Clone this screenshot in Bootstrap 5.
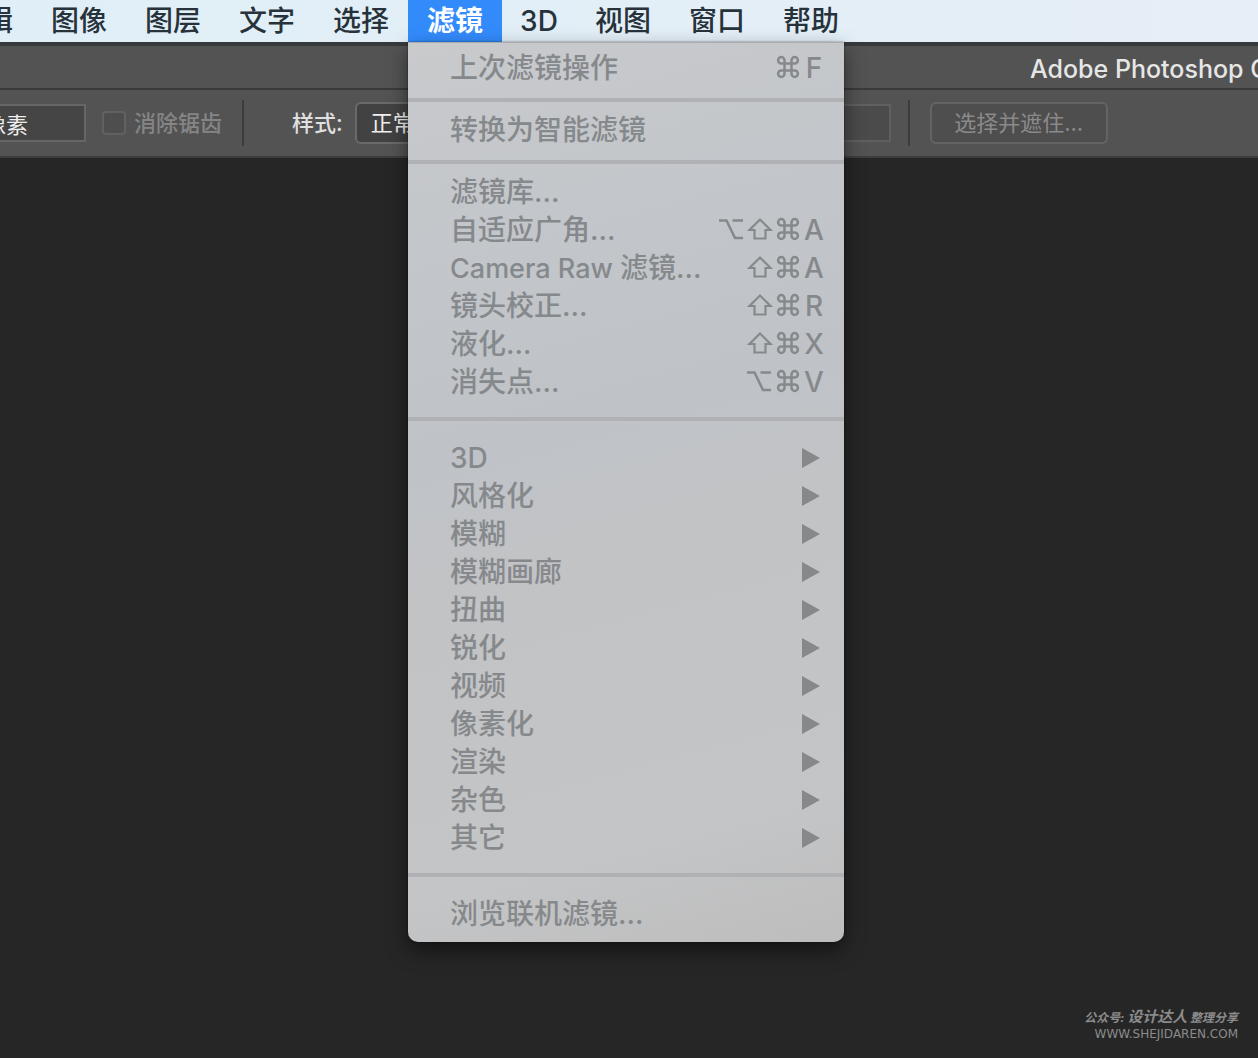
<!DOCTYPE html>
<html lang="zh-CN">
<head>
<meta charset="utf-8">
<meta name="viewport" content="width=device-width, initial-scale=1">
<title>Adobe Photoshop CC</title>
<link href="https://cdn.jsdelivr.net/npm/bootstrap@5.3.0/dist/css/bootstrap.min.css" rel="stylesheet">
<script src="https://cdn.jsdelivr.net/npm/bootstrap@5.3.0/dist/js/bootstrap.bundle.min.js"></script>
<style>
  body { background: #262626; font-family: Inter, "Noto Sans CJK SC", sans-serif; font-weight: 500; overflow-x: hidden; }
  /* system menu bar */
  .menubar { background: linear-gradient(90deg, #e0eff7, #e6eef7); }
  .menubar-list { margin-left: -62px; }
  .menubar .nav-link { height: 42px; padding: 0 18px; font-size: 28px; line-height: 42px; color: #27323b; min-width: 74px; white-space: nowrap; text-align: center; }
  .menubar .nav-wide { min-width: 94px; }
  .menubar .nav-link.active { background: #338bfb; color: #fff; font-weight: 700; }
  /* filter menu */
  .filter-menu { top: 42px; left: 0; width: 436px; padding: 6px 0 10px; border: 0; border-radius: 0 0 10px 10px;
    background: linear-gradient(165deg, #c8cacc 0%, #c3c6ca 20%, #bfc3c8 42%, #c2c3c5 55%, #c4c5c6 85%, #bdbdbe 100%);
    box-shadow: inset 0 1px 0 #a9abad, 0 8px 20px rgba(0,0,0,.5), 0 0 2px rgba(0,0,0,.5); }
  .filter-menu .dropdown-item { height: 38px; padding: 2px 20px 0 42px; font-size: 28px; font-weight: 500; line-height: 36px; color: #86898c; }
  .filter-menu .has-sub { padding-right: 24px; }
  .latin { font-size: 27px; }
  .rule { height: 4px; margin: 12px 0 8px; background: #afb1b4; }
  .rule-wide { margin: 17px 0; }
  .keys svg { width: 28px; height: 28px; fill: none; stroke: currentColor; stroke-width: 2.5; }
  .key-letter { width: 20px; margin-left: 2px; text-align: center; }
  .arrow { width: 18px; height: 20px; fill: #86888a; }
  /* application window */
  .titlebar { height: 48px; border-top: 4px solid #363a3d; border-bottom: 2px solid #3a3a3a; background: #535353; }
  .app-title { width: 228px; font-size: 25px; line-height: 46px; color: #e6e6e6; white-space: nowrap; }
  .optionbar { height: 68px; background: #535353; border-bottom: 2px solid #3e3e3e; font-size: 22px; color: #e0e0e0; white-space: nowrap; }
  .field { height: 38px; background: #454545; border: 2px solid #666; color: #eee; padding: 0 10px; }
  .field-feather { width: 134px; margin-left: -48px; }
  .field:disabled { background: #4b4b4b; border-color: #606060; }
  .field-size { width: 150px; }
  .tick { appearance: none; width: 24px; height: 24px; margin: 0 8px 0 16px; background: #4e4e4e; border: 2px solid #616161; border-radius: 4px; }
  .dim { color: #858585; }
  .divider { width: 2px; height: 46px; background: #3c3c3c; }
  .divider-first { margin: 0 48px 0 20px; }
  .divider-last { margin: 0 20px 0 17px; }
  .style-pick { width: 190px; height: 42px; margin: 0 22px 0 12px; padding: 0 10px; background: #424242; color: #f0f0f0; border: 2px solid #6a6a6a; border-radius: 6px; }
  .mask-btn { width: 178px; height: 42px; padding: 0; font-size: 22px; line-height: 38px; background: #4e4e4e; border: 2px solid #646464; border-radius: 6px; }
  .mask-btn:disabled { opacity: 1; background: #4e4e4e; border-color: #646464; color: #8a8a8a; }
  .canvas-area { padding: 18px 20px; }
  .credit { color: #8b8b8b; font-size: 12px; line-height: 20px; font-style: italic; font-weight: 700; white-space: nowrap; }
  .credit-name { font-size: 15px; }
  .credit-url { color: #8b8b8b; font: 12px/12px "DejaVu Sans", sans-serif; text-decoration: none; }
</style>
</head>
<body class="d-flex flex-column min-vh-100">
<svg class="d-none" aria-hidden="true">
  <symbol id="cmd" viewBox="0 1 28 28"><path d="M10.500 10.500h7v7h-7zM10.500 10.500H7.300a3.200 3.200 0 1 1 3.200-3.200zM17.500 10.500V7.300a3.200 3.200 0 1 1 3.200 3.200zM17.500 17.500h3.200a3.200 3.200 0 1 1-3.200 3.200zM10.500 17.500v3.200a3.200 3.200 0 1 1-3.200-3.200z"/></symbol>
  <symbol id="shift" viewBox="0 1 28 28"><path stroke-width="2.200" d="M14 4.500L3.500 15H8.500v8.500h11V15h5z"/></symbol>
  <symbol id="opt" viewBox="0 1 28 28"><path d="M1 5.500h7.500l8.500 17.500H25M14.500 5.500H25"/></symbol>
</svg>

<nav class="menubar">
  <ul class="nav flex-nowrap menubar-list">
    <li><a class="nav-link nav-wide" href="#">编辑</a></li>
    <li><a class="nav-link nav-wide" href="#">图像</a></li>
    <li><a class="nav-link nav-wide" href="#">图层</a></li>
    <li><a class="nav-link nav-wide" href="#">文字</a></li>
    <li><a class="nav-link nav-wide" href="#">选择</a></li>
    <li class="position-relative">
      <a class="nav-link nav-wide active" href="#" aria-expanded="true">滤镜</a>
      <div class="dropdown-menu show filter-menu">
        <button class="dropdown-item d-flex justify-content-between" disabled>上次滤镜操作<span class="keys d-flex align-items-center"><svg><use href="#cmd"/></svg><span class="key-letter">F</span></span></button>
        <div class="rule"></div>
        <button class="dropdown-item" disabled>转换为智能滤镜</button>
        <div class="rule"></div>
        <button class="dropdown-item" disabled>滤镜库...</button>
        <button class="dropdown-item d-flex justify-content-between" disabled>自适应广角...<span class="keys d-flex align-items-center"><svg><use href="#opt"/></svg><svg><use href="#shift"/></svg><svg><use href="#cmd"/></svg><span class="key-letter">A</span></span></button>
        <button class="dropdown-item d-flex justify-content-between" disabled><span><span class="latin">Camera Raw </span>滤镜...</span><span class="keys d-flex align-items-center"><svg><use href="#shift"/></svg><svg><use href="#cmd"/></svg><span class="key-letter">A</span></span></button>
        <button class="dropdown-item d-flex justify-content-between" disabled>镜头校正...<span class="keys d-flex align-items-center"><svg><use href="#shift"/></svg><svg><use href="#cmd"/></svg><span class="key-letter">R</span></span></button>
        <button class="dropdown-item d-flex justify-content-between" disabled>液化...<span class="keys d-flex align-items-center"><svg><use href="#shift"/></svg><svg><use href="#cmd"/></svg><span class="key-letter">X</span></span></button>
        <button class="dropdown-item d-flex justify-content-between" disabled>消失点...<span class="keys d-flex align-items-center"><svg><use href="#opt"/></svg><svg><use href="#cmd"/></svg><span class="key-letter">V</span></span></button>
        <div class="rule rule-wide"></div>
        <button class="dropdown-item has-sub d-flex justify-content-between align-items-center" disabled>3D<svg class="arrow"><path d="M0 0l18 10-18 10z"/></svg></button>
        <button class="dropdown-item has-sub d-flex justify-content-between align-items-center" disabled>风格化<svg class="arrow"><path d="M0 0l18 10-18 10z"/></svg></button>
        <button class="dropdown-item has-sub d-flex justify-content-between align-items-center" disabled>模糊<svg class="arrow"><path d="M0 0l18 10-18 10z"/></svg></button>
        <button class="dropdown-item has-sub d-flex justify-content-between align-items-center" disabled>模糊画廊<svg class="arrow"><path d="M0 0l18 10-18 10z"/></svg></button>
        <button class="dropdown-item has-sub d-flex justify-content-between align-items-center" disabled>扭曲<svg class="arrow"><path d="M0 0l18 10-18 10z"/></svg></button>
        <button class="dropdown-item has-sub d-flex justify-content-between align-items-center" disabled>锐化<svg class="arrow"><path d="M0 0l18 10-18 10z"/></svg></button>
        <button class="dropdown-item has-sub d-flex justify-content-between align-items-center" disabled>视频<svg class="arrow"><path d="M0 0l18 10-18 10z"/></svg></button>
        <button class="dropdown-item has-sub d-flex justify-content-between align-items-center" disabled>像素化<svg class="arrow"><path d="M0 0l18 10-18 10z"/></svg></button>
        <button class="dropdown-item has-sub d-flex justify-content-between align-items-center" disabled>渲染<svg class="arrow"><path d="M0 0l18 10-18 10z"/></svg></button>
        <button class="dropdown-item has-sub d-flex justify-content-between align-items-center" disabled>杂色<svg class="arrow"><path d="M0 0l18 10-18 10z"/></svg></button>
        <button class="dropdown-item has-sub d-flex justify-content-between align-items-center" disabled>其它<svg class="arrow"><path d="M0 0l18 10-18 10z"/></svg></button>
        <div class="rule rule-wide"></div>
        <button class="dropdown-item" disabled>浏览联机滤镜...</button>
      </div>
    </li>
    <li><a class="nav-link" href="#">3D</a></li>
    <li><a class="nav-link nav-wide" href="#">视图</a></li>
    <li><a class="nav-link nav-wide" href="#">窗口</a></li>
    <li><a class="nav-link nav-wide" href="#">帮助</a></li>
  </ul>
</nav>

<header class="titlebar d-flex justify-content-end">
  <div class="app-title overflow-hidden">Adobe Photoshop CC</div>
</header>

<form class="optionbar d-flex align-items-center overflow-hidden">
  <input class="field field-feather flex-shrink-0" type="text" value="0 像素" aria-label="羽化">
  <input class="tick flex-shrink-0" type="checkbox" id="aa" disabled>
  <label class="dim" for="aa">消除锯齿</label>
  <div class="divider divider-first flex-shrink-0"></div>
  <label for="style">样式:</label>
  <select class="style-pick flex-shrink-0" id="style"><option>正常</option></select>
  <input class="field field-size flex-shrink-0 me-4" type="text" aria-label="宽度" disabled>
  <input class="field field-size flex-shrink-0" type="text" aria-label="高度" disabled>
  <div class="divider divider-last flex-shrink-0"></div>
  <button class="btn mask-btn flex-shrink-0" type="button" disabled>选择并遮住...</button>
</form>

<main class="canvas-area flex-fill d-flex flex-column justify-content-end align-items-end">
  <div class="credit">公众号: <span class="credit-name">设计达人</span> 整理分享</div>
  <a class="credit-url" href="#">WWW.SHEJIDAREN.COM</a>
</main>
</body>
</html>
